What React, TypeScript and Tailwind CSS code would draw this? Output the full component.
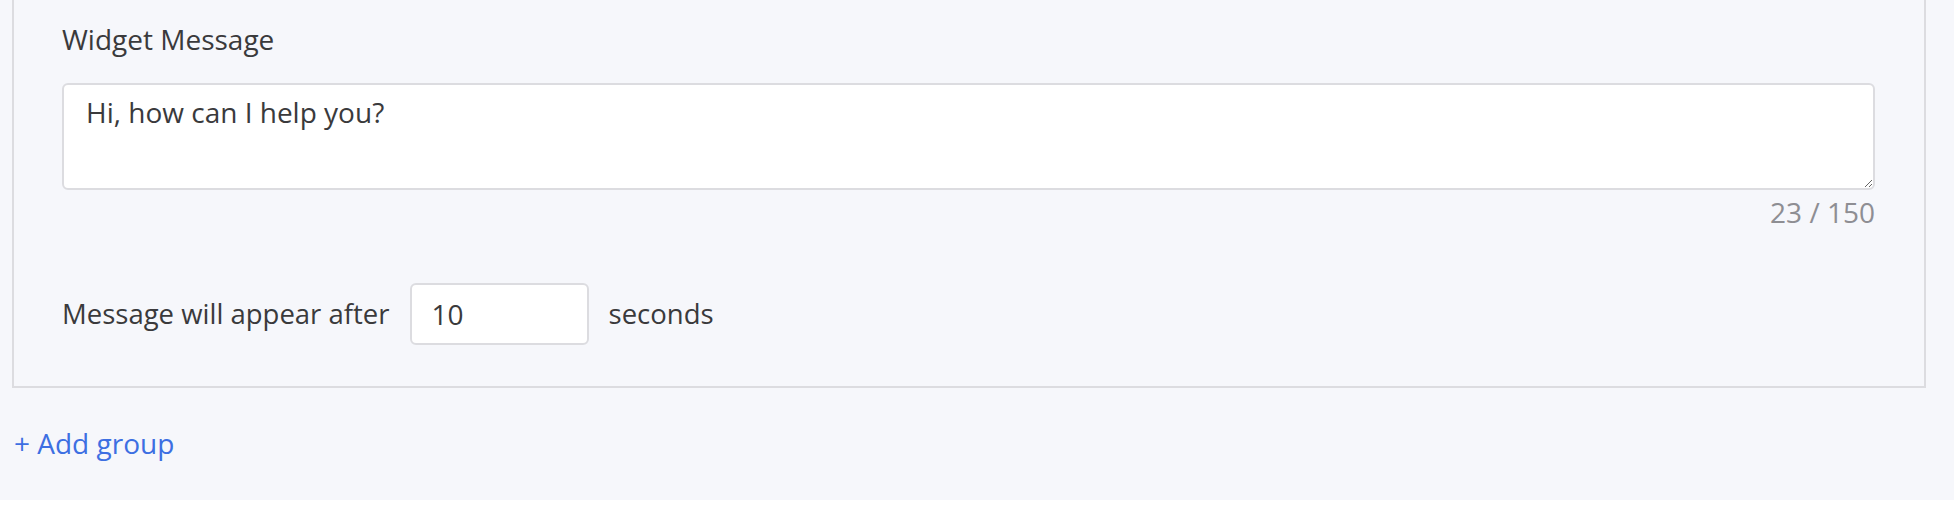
import React, { useState } from 'react';

/**
 * Widget message settings block: message text, character counter,
 * delay before the message appears, and a link to add another group.
 */

const MAX_LENGTH = 150;

export default function App() {
  const [message, setMessage] = useState('Hi, how can I help you?');
  const [delay, setDelay] = useState('10');

  return (
    <div className="min-h-[500px] bg-[#f6f7fb] pl-[12px] pr-[28px] pb-[37px] font-['Open_Sans',sans-serif] text-[28px] leading-[40px] text-[#3a3a3c]">
      <div className="border-x-2 border-b-2 border-[#dcdce0] pl-[48px] pr-[49px] pt-[19px] pb-[41px]">
        <label className="block">Widget Message</label>

        <textarea
          value={message}
          maxLength={MAX_LENGTH}
          onChange={(e) => setMessage(e.target.value)}
          className="mt-[24px] block h-[107px] w-full rounded-[6px] border-2 border-[#dcdce0] bg-white px-[22px] pt-[7px] text-[28px] leading-[40px] text-[#3a3a3c] outline-none"
        />

        <div className="mt-[2px] text-right text-[#8e8e93]">
          {message.length} / {MAX_LENGTH}
        </div>

        <div className="mt-[51px] flex items-center gap-[20px] text-[27.5px]">
          <span>Message will appear after</span>
          <input
            type="text"
            value={delay}
            onChange={(e) => setDelay(e.target.value)}
            className="h-[62px] w-[179px] rounded-[6px] border-2 border-[#dcdce0] bg-white px-[20px] text-[28px] text-[#3a3a3c] outline-none"
          />
          <span>seconds</span>
        </div>
      </div>

      <button className="mt-[35px] ml-[2px] block text-[#3d6fe2]">+ Add group</button>
    </div>
  );
}
